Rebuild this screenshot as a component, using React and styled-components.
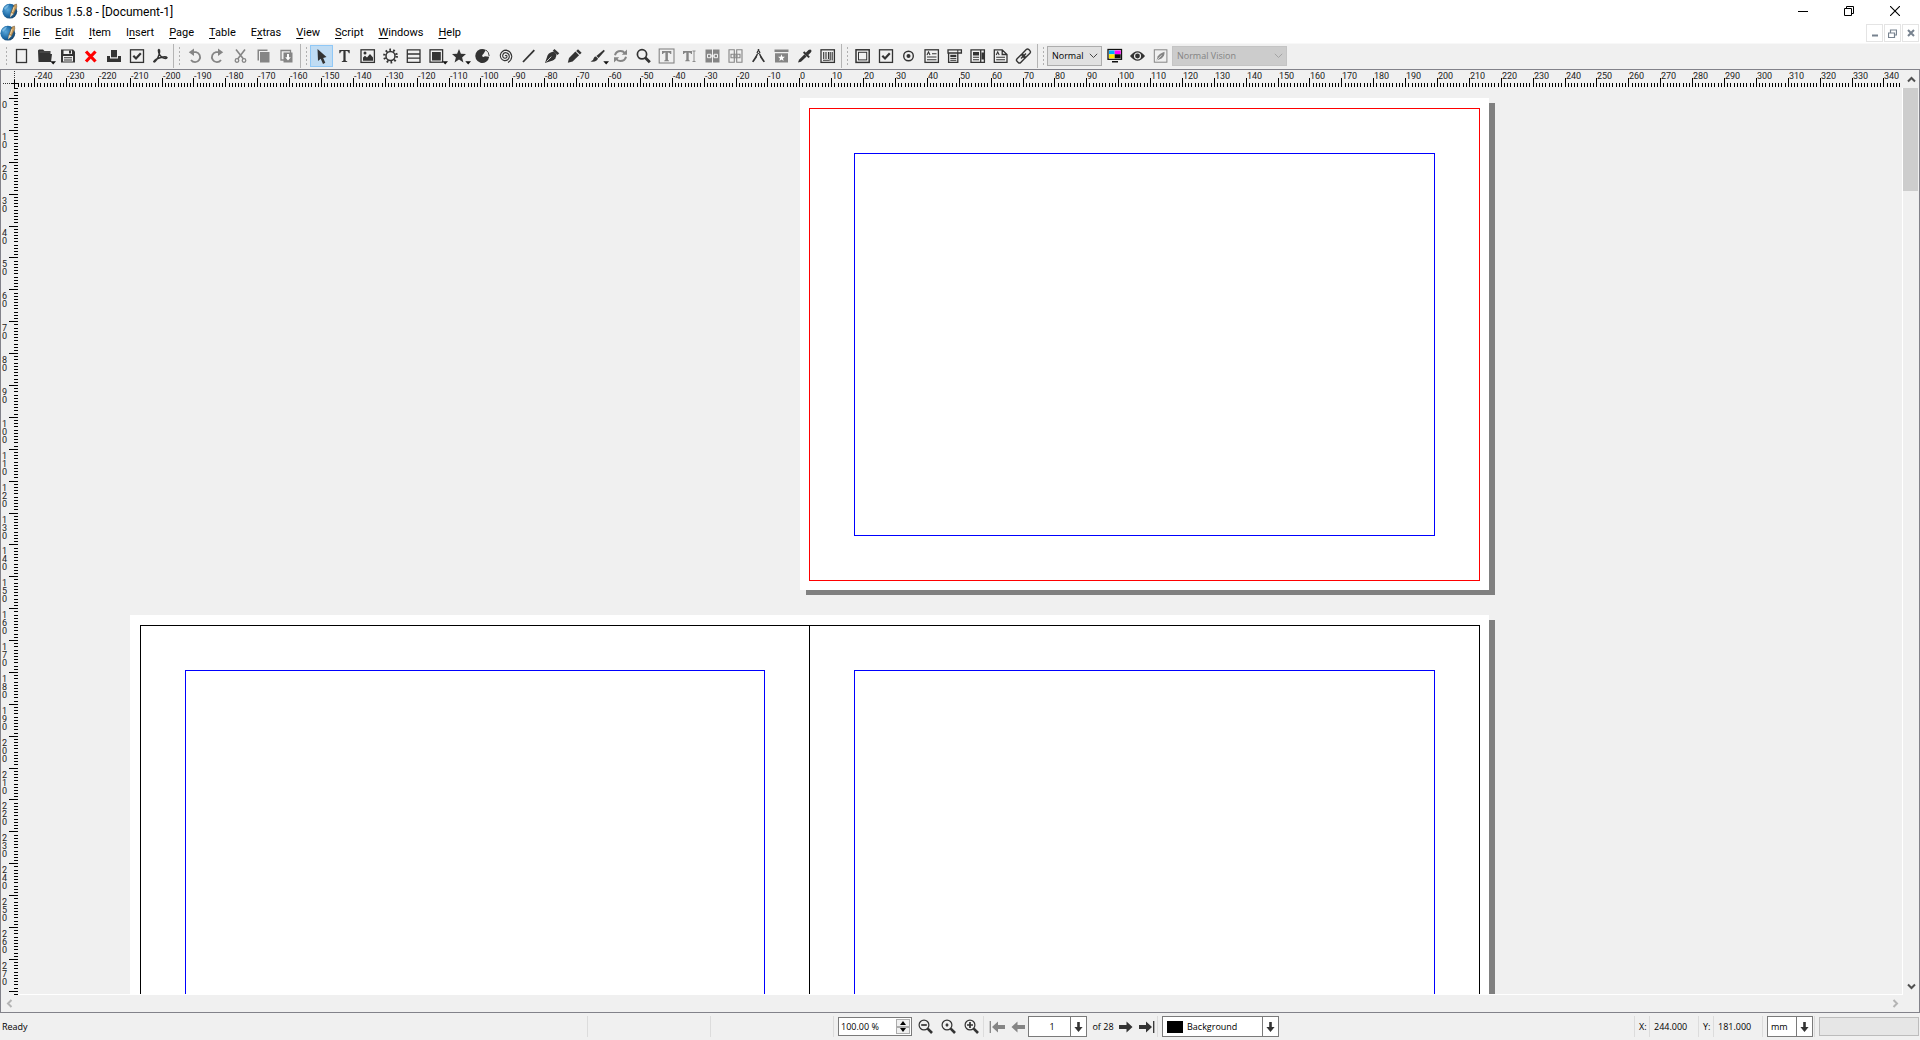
import React from "react";
import styled, { createGlobalStyle } from "styled-components";

const GlobalStyle = createGlobalStyle`
  *, *::before, *::after { box-sizing: border-box; }
  html, body, #root { height: 100%; }
  body {
    margin: 0;
    overflow: hidden;
    background: #f0f0f0;
    color: #000;
    font: 9px/12px "Open Sans", "Noto Sans", sans-serif;
  }
  button, input, select { font: inherit; color: inherit; margin: 0; }
`;

const INK = "#333";
const GREY = "#858585";
const UI_FONT = '"Roboto", "Open Sans", sans-serif';

/* ---------- window frame ---------- */

const Window = styled.div`
  display: flex;
  flex-direction: column;
  height: 100vh;
`;

const TitleBar = styled.header`
  display: flex;
  align-items: center;
  height: 22px;
  padding: 0 2px;
  background: #fff;
`;

const Title = styled.h1`
  flex: 1;
  margin: 0 0 0 5px;
  padding-top: 2px;
  font: 400 12px/20px ${UI_FONT};
`;

const CaptionButton = styled.button`
  display: grid;
  place-items: center;
  width: 46px;
  height: 20px;
  padding: 0;
  border: 0;
  background: none;
`;

const MenuBar = styled.nav`
  display: flex;
  align-items: center;
  height: 21px;
  padding: 1px 1px 0 0;
  background: #fff;
`;

const MenuList = styled.ul`
  display: flex;
  flex: 1;
  gap: 15px;
  margin: 0;
  padding: 0 0 0 7px;
  list-style: none;
`;

const MenuItem = styled.button`
  padding: 0;
  border: 0;
  background: none;
  font: 11px/20px ${UI_FONT};
  text-underline-offset: 2px;
`;

const MdiButtons = styled.div`
  display: flex;
  gap: 1px;
`;

const MdiButton = styled.button`
  display: grid;
  place-items: center;
  width: 17px;
  height: 18px;
  padding: 0;
  border: 1px solid #e4e4e4;
  background: #fff;
`;

/* ---------- toolbar ---------- */

const ToolBar = styled.div`
  display: flex;
  align-items: center;
  height: 26px;
  padding: 0 0 1px 1px;
  border-top: 1px solid #f8f8f8;
`;

const ToolGroup = styled.div`
  display: flex;
  align-items: center;
  height: 100%;
  padding: 0 2px 0 4px;
  border-right: ${(p) => (p.$last ? "0" : "1px solid #b4b4b4")};
`;

const Grip = styled.span`
  width: 3px;
  height: 20px;
  margin-right: 2px;
  background: radial-gradient(circle, #b0b0b0 1px, transparent 1px) 0 0 / 3px 4px;
`;

const ToolButton = styled.button`
  display: block;
  width: 23px;
  height: 22px;
  padding: 0;
  border: 0;
  background: ${(p) => (p.$active ? "#c0dcf3" : "none")};
  box-shadow: ${(p) => (p.$active ? "inset 0 0 0 1px #90c8f6" : "none")};
  color: ${(p) => (p.$dim ? GREY : INK)};
`;

const ToolSelectBox = styled.span`
  position: relative;
  display: flex;
  width: ${(p) => p.$width}px;
  height: 20px;
  margin-right: 1px;
`;

const ToolSelect = styled.select`
  appearance: none;
  width: 100%;
  padding: 0 4px;
  border: 1px solid ${(p) => (p.disabled ? "#c4c4c4" : "#adadad")};
  border-radius: 0;
  background: ${(p) => (p.disabled ? "#ccc" : "#e1e1e1")};
  color: ${(p) => (p.disabled ? "#838383" : "#000")};
  opacity: 1;
`;

const Chevron = styled.svg`
  position: absolute;
  right: 4px;
  top: 7px;
  pointer-events: none;
`;

/* ---------- document area ---------- */

const Document = styled.main`
  display: grid;
  grid-template: 18px minmax(0, 1fr) 17px / 17px minmax(0, 1fr) 16px;
  flex: 1;
  min-height: 0;
  border: 1px solid #82828a;
`;

const Ruler = styled.div`
  display: grid;
  overflow: hidden;
`;

const Ticks = styled.svg`
  grid-area: 1 / 1;
  display: block;
`;

const Labels = styled.div`
  grid-area: 1 / 1;
  display: flex;
  flex-direction: ${(p) => (p.$vertical ? "column" : "row")};
  font: 9px/8px ${UI_FONT};
  color: #222;
`;

const Label = styled.span`
  display: flex;
  flex: none;
  flex-direction: ${(p) => (p.$vertical ? "column" : "row")};
  padding: ${(p) => (p.$vertical ? "3px 0 0 1px" : "2px 0 0 1px")};
`;

const Canvas = styled.section`
  display: flex;
  flex-direction: column;
  gap: 25px;
  padding: 10px 0 0 112px;
  overflow: hidden;
  border: solid #fff;
  border-width: 0 1px 1px 0;
`;

const Sheet = styled.div`
  display: flex;
  flex: none;
  width: ${(p) => p.$width}px;
  height: 492px;
  margin-left: ${(p) => p.$indent}px;
  padding: 10px 9px 9px ${(p) => p.$bleed}px;
  background: #fff;
  box-shadow: 6px 5px 0 #808080;
`;

const Page = styled.div`
  display: flex;
  flex: none;
  width: ${(p) => p.$width}px;
  padding: 44px;
  border: 1px solid ${(p) => p.$edge};
  & + & { margin-left: -1px; }
`;

const Margins = styled.div`
  flex: 1;
  border: 1px solid #00f;
`;

const VScroll = styled.div`
  display: flex;
  flex-direction: column;
  grid-row: 1 / 3;
  grid-column: 3;
`;

const HScroll = styled.div`
  display: flex;
  justify-content: space-between;
  grid-row: 3;
  grid-column: 1 / 3;
`;

const ScrollButton = styled.button`
  display: grid;
  place-items: center;
  width: 16px;
  height: ${(p) => (p.disabled ? 16 : 18)}px;
  padding: 0;
  border: 0;
  background: none;
  color: ${(p) => (p.disabled ? "#b4b4b4" : "#505050")};
`;

const Track = styled.div`
  flex: 1;
`;

const Thumb = styled.div`
  width: 15px;
  height: 11.6%;
  background: #cdcdcd;
`;

/* ---------- status bar ---------- */

const StatusBar = styled.footer`
  display: grid;
  grid-template-columns: minmax(0, 17fr) auto minmax(0, 13fr);
  height: 27px;
`;

const StatusPart = styled.div`
  display: flex;
  align-items: center;
  justify-content: ${(p) => p.$justify || "flex-start"};
  padding: 0 ${(p) => p.$end || 0}px 0 0;
`;

const Message = styled.span`
  flex: 1;
  padding-left: 2px;
`;

const Divider = styled.i`
  width: 1px;
  height: 21px;
  margin-right: ${(p) => p.$after || 4}px;
  background: #dcdcdc;
`;

const Field = styled.span`
  position: relative;
  display: flex;
  width: ${(p) => p.$width}px;
  height: ${(p) => p.$height || 21}px;
  margin-right: ${(p) => p.$after || 4}px;
  border: 1px solid #7a7a7a;
  background: #fff;
`;

const ZoomInput = styled.input`
  flex: 1;
  min-width: 0;
  padding: 0 2px;
  border: 0;
  background: none;
`;

const Spinner = styled.span`
  display: flex;
  flex-direction: column;
  width: 14px;
  margin: 1px;
`;

const SpinButton = styled.button`
  display: grid;
  place-items: center;
  flex: 1;
  padding: 0;
  border: 1px solid #acacac;
  background: #f0f0f0;
`;

const FieldSelect = styled.select`
  appearance: none;
  flex: 1;
  min-width: 0;
  padding: 0 15px 0 ${(p) => p.$indent || 4}px;
  border: 0;
  border-radius: 0;
  background: none;
  text-align: ${(p) => (p.$center ? "center" : "left")};
`;

const FieldArrow = styled.span`
  position: absolute;
  inset: 0 0 0 auto;
  display: grid;
  place-items: center;
  width: 16px;
  border-left: 1px solid #7a7a7a;
  pointer-events: none;
`;

const Swatch = styled.span`
  align-self: center;
  width: 16px;
  height: 12px;
  margin-left: 4px;
  background: #000;
`;

const StatusButton = styled.button`
  display: grid;
  place-items: center;
  width: ${(p) => p.$width || 23}px;
  height: 22px;
  padding: 0;
  border: 0;
  background: none;
  color: ${(p) => (p.disabled ? GREY : INK)};
`;

const Count = styled.span`
  width: 24px;
  text-align: center;
  white-space: nowrap;
`;

const Coord = styled.output`
  width: ${(p) => p.$width}px;
`;

const Progress = styled.div`
  width: 100px;
  height: 19px;
  border: 1px solid #bcbcbc;
  background: #e6e6e6;
`;

/* ---------- drawings ---------- */

const Logo = () => (
  <svg width="16" height="16" viewBox="0 0 16 16" aria-hidden="true">
    <defs>
      <radialGradient id="globe" cx=".35" cy=".4" r=".7">
        <stop offset="0" stopColor="#5aa7da" />
        <stop offset=".6" stopColor="#1d6aa6" />
        <stop offset="1" stopColor="#173f63" />
      </radialGradient>
    </defs>
    <circle cx="7.8" cy="8.2" r="7.4" fill="url(#globe)" />
    <path d="M2 5Q4 2 7 1.5L6 4L3 7Z" fill="#8fc9ee" opacity=".7" />
    <path d="M9 9.5L12 2L14.5 1L14.8 4L11.5 11L8.5 13.5Z" fill="#c69b5b" stroke="#6b5132" strokeWidth=".5" />
    <path d="M9 10L8 14.5L11.5 11Z" fill="#e9dcc4" />
    <path d="M12 4L10.5 9" stroke="#f3dfb5" strokeWidth=".9" />
  </svg>
);

const More = () => <path d="M17.3 16.2H23L20.2 19.4Z" fill="#111" />;

const outline = { fill: "none", stroke: "currentColor", strokeWidth: 1.3 };

const icons = {
  blank: <rect x="6.5" y="4.5" width="10" height="13" {...outline} />,
  open: <><path d="M5 5.5L6 4.5H10L11.5 6H17.5V9H19L18 17H5.5Z" fill="currentColor" /><path d="M6.5 7H17" stroke="#777" strokeWidth=".6" /><More /></>,
  save: <><path d="M5 4.5H17L19 6.5V17.5H5Z" fill="currentColor" /><path d="M7.5 5.5H16V9H7.5ZM7 11H17V16.5H7Z" fill="#f0f0f0" /><path d="M13 5.5H15V8.5H13ZM8 12.2H16V13.2H8ZM8 14.5H16V15.5H8Z" fill="currentColor" /></>,
  close: <path d="M7 6.5L16.5 16.5M16.5 6.5L7 16.5" stroke="#f00" strokeWidth="3.2" />,
  print: <><path d="M5 11H8V13.5H16V11H19V17H5Z" fill="currentColor" /><path d="M9 5H15V12.3H9Z" fill="currentColor" /></>,
  check: <><rect x="5.5" y="4.8" width="13" height="12.6" {...outline} /><path d="M8.3 10.8L11 13.5L15.8 8.3" {...outline} strokeWidth="2.2" /></>,
  pdf: <path d="M11.5 5Q10.5 4 10.4 5.5Q10.7 10.5 15 12.8Q18.5 14.2 19 12.6Q18 11.2 13 12.4Q7.5 13.6 5.8 16.6Q6.6 17.6 8.7 14.6Q12.2 9 11.5 5" {...outline} strokeWidth="1.5" />,
  undo: <><path d="M9 7.2H13A5 5 0 1 1 8 15" {...outline} strokeWidth="1.8" /><path d="M11 3.5V11L5.8 7.2Z" fill="currentColor" /></>,
  redo: <><path d="M14 7.2H10A5 5 0 1 0 15 15" {...outline} strokeWidth="1.8" /><path d="M12 3.5V11L17.2 7.2Z" fill="currentColor" /></>,
  cut: <><path d="M7 4.5L14.5 14M16 4.5L8.7 14" {...outline} strokeWidth="1.6" /><circle cx="8" cy="15.5" r="1.8" {...outline} /><circle cx="15" cy="15.5" r="1.8" {...outline} /></>,
  copy: <><path d="M5.5 4.5H15.5V6H7V15.5H5.5Z" fill="currentColor" /><path d="M8 7H17.5V17.5H8Z" fill="currentColor" /></>,
  paste: <><path d="M6 5.5H15.5V15H6Z" {...outline} /><path d="M8.5 7.5H17.5V17.5H8.5Z" fill="currentColor" /><path d="M13 9V13" stroke="#fff" strokeWidth="2" /><path d="M10.2 12.2H15.8L13 15.5Z" fill="#fff" /></>,
  select: <path d="M7.5 4L8 16L10.7 13.8L13 19L15.3 17.8L13.2 13L16.5 12Z" fill="currentColor" />,
  text: <path d="M6.3 5H16.7V8.3H15.8Q15.4 6.2 13.5 6.1H12.6V15.2Q12.6 16.1 14.2 16.2V17H8.8V16.2Q10.4 16.1 10.4 15.2V6.1H9.5Q7.6 6.2 7.2 8.3H6.3Z" fill="currentColor" />,
  image: <><rect x="5" y="4.8" width="13.4" height="12.6" {...outline} /><path d="M7 15.8V12.5L9 10.8L11 12.5L14 9L17 12.5V15.8Z" fill="currentColor" /><circle cx="9" cy="8" r="1.5" fill="currentColor" /></>,
  gear: <><circle cx="11.5" cy="11" r="4.5" {...outline} strokeWidth="1.5" /><circle cx="11.5" cy="11" r="6.2" {...outline} strokeWidth="2.4" strokeDasharray="1.7 2.196" /></>,
  table: <path d="M5.3 4.8H18V17.4H5.3ZM5.3 9H18M5.3 13.2H18" {...outline} />,
  shape: <><rect x="5" y="4.8" width="12.6" height="12.4" {...outline} /><path d="M7 7H15.8V15.5H7Z" fill="currentColor" /><More /></>,
  star: <><path d="M11 4L12.9 8.8L18 9.1L14.1 12.4L15.4 17.4L11 14.6L6.6 17.4L7.9 12.4L4 9.1L9.1 8.8Z" fill="currentColor" /><More /></>,
  arc: <><path d="M14.8 4.9A7 7 0 1 0 18.2 11.8L13.8 11.2Q12.4 12.6 11.2 11.2Q10.8 9.6 12.4 8.9Z" fill="currentColor" /><path d="M14.8 4.9Q18 7 18.2 11" {...outline} strokeWidth=".9" /></>,
  spiral: <path d="M11.2 11Q12 9.5 13 11Q13.2 13.2 11 13.3Q8.5 13 8.7 10.4Q9.4 7.4 12.2 7.7Q15.6 8.6 15.3 12Q14.2 15.9 10.4 15.6Q6.2 14.5 6.3 10Q7.6 5.2 12.2 5.1Q17.2 6.2 17.8 11.5Q17.4 15.6 14 17.5" {...outline} strokeWidth="1.1" />,
  line: <path d="M6 17L17.3 5.2" {...outline} strokeWidth="1.8" />,
  pen: <><path d="M5 18L7.5 10.5Q9.5 7 14 6.6L16.5 9.2Q16.2 13.8 12.8 15.6Z" fill="currentColor" /><path d="M13.6 4.8L18.4 9.2" {...outline} strokeWidth="2.5" /><path d="M6.5 16.5L11.3 11.7" stroke="#f0f0f0" strokeWidth=".8" /></>,
  pencil: <><path d="M4.8 17.7L6 13L12.4 6.6L16.1 10.2L9.6 16.6Z" fill="currentColor" /><path d="M13.2 5.9L15 4.2L18.6 7.8L16.9 9.5Z" fill="currentColor" /></>,
  brush: <><path d="M17.8 4.8L18.8 6L12.6 13L10.4 11Z" fill="currentColor" /><path d="M9.9 11.6L12 13.6Q11 17.4 4.5 16.6Q7.8 15 7.8 13Q8.6 11.6 9.9 11.6Z" fill="currentColor" /><More /></>,
  rotate: <><path d="M6 10.3Q7 6 11.6 6Q14.3 6 15.7 8M17 11.7Q16 16 11.4 16Q8.7 16 7.3 14" {...outline} strokeWidth="2" /><path d="M18 4.5V9.7H12.8ZM5 17.5V12.3H10.2Z" fill="currentColor" /></>,
  zoom: <><circle cx="10" cy="9.3" r="4.6" {...outline} strokeWidth="1.7" /><path d="M13.3 12.7L17.8 17.2" {...outline} strokeWidth="2.8" /></>,
  editText: <><rect x="4.2" y="4" width="14.8" height="14" {...outline} strokeWidth="1.1" /><path d="M7 6H16.3V9H15.3Q15 7.6 12.9 7.5V14.6Q12.9 15.4 14 15.5V16.3H9.2V15.5Q10.4 15.4 10.4 14.6V7.5Q8.2 7.6 8 9H7Z" fill="currentColor" /></>,
  story: <><path d="M5 6H14V9H13.1Q12.9 7.6 10.7 7.5V14.6Q10.7 15.4 11.8 15.5V16.3H7.2V15.5Q8.3 15.4 8.3 14.6V7.5Q6.1 7.6 5.9 9H5Z" fill="currentColor" /><path d="M14.5 6H17.5M16 6V16.5M14.5 16.5H17.5" {...outline} strokeWidth=".9" /></>,
  link: <><path d="M4.5 4.5H11V17.5H4.5ZM12 4.5H18.5V17.5H12Z" fill="currentColor" /><path d="M6.5 9.3H10V12.7H6.5ZM13 9.3H16.5V12.7H13ZM9 11H14" fill="none" stroke="#fff" strokeWidth=".9" /></>,
  unlink: <><path d="M5 4.8H10.3V17.2H5ZM12.7 4.8H18V17.2H12.7Z" {...outline} strokeWidth="1.1" /><path d="M7 9.3H16V12.7H7ZM9 11H14" {...outline} strokeWidth="1.1" /></>,
  measure: <><circle cx="11.5" cy="7.3" r="1.8" fill="currentColor" /><circle cx="11.5" cy="7.3" r=".7" fill="#f0f0f0" /><path d="M11.5 4V6M10.4 9L9 11.8M12.6 9L14 11.8" {...outline} strokeWidth="1.5" /><path d="M8.6 11L10.1 12L6.5 17.3L5 16.4ZM14.4 11L12.9 12L16.5 17.3L18 16.4Z" fill="currentColor" /></>,
  copyProps: <><path d="M4.5 4.5H18.5V7H4.5ZM5 8.3H18V17.5H5Z" fill="currentColor" /><path d="M11.5 9.3L12.4 11.7L14.9 11.8L13 13.4L13.6 15.9L11.5 14.5L9.4 15.9L10 13.4L8.1 11.8L10.6 11.7Z" fill="#fff" /></>,
  dropper: <><path d="M5 17.5L6 14.8L11.5 9.3L13.6 11.4L8 16.8Z" fill="currentColor" /><path d="M10.6 7L16.2 12.4" {...outline} strokeWidth="2" /><path d="M12.5 8L15.5 5Q17.3 3.8 18.2 5Q19 6.2 17.8 7.4L15 10.3Z" fill="currentColor" /></>,
  barcode: <><rect x="5" y="4.8" width="13.4" height="12.6" {...outline} /><path d="M7.7 7V14M10 7V14M12.5 7V14M14.2 7V15.5M16.2 7V15.5M7 15.3H13.5" {...outline} strokeWidth="1.1" /></>,
  button: <><rect x="5" y="4.8" width="13.2" height="12.6" {...outline} strokeWidth="1.5" /><rect x="7.5" y="7.3" width="8.2" height="7.6" {...outline} strokeWidth="1" /></>,
  radio: <><circle cx="11.5" cy="11" r="4.8" {...outline} strokeWidth="1.4" /><circle cx="11.5" cy="11" r="2" fill="currentColor" /></>,
  textField: <><rect x="5" y="4.8" width="13.4" height="12.6" {...outline} /><path d="M7 10L8.5 7L10 10M12 8.7H16.5M7 12H16.5M7 14.8H16.5" {...outline} strokeWidth="1.1" /></>,
  combo: <><path d="M5 4.8H18.4V8H5ZM5.6 8V17.4H14.8V8" {...outline} /><path d="M7.3 9.8H13.3V12H7.3Z" fill="currentColor" /><path d="M7.3 13.4H13.3M7.3 15.3H13.3M14.8 5V8" {...outline} strokeWidth="1" /></>,
  list: <><path d="M5 4.8H18.4V17.4H5ZM14.7 5V17.4" {...outline} /><path d="M7 7H13V10.5H7ZM15.5 7.5H18V14.5H15.5Z" fill="currentColor" /><path d="M7 12.3H13M7 14.8H13" {...outline} strokeWidth="1.1" /></>,
  note: <><path d="M5.3 4.8H13.2L18 9.5V17.4H5.3ZM13.2 4.8V9.5H18" {...outline} /><path d="M7.2 10L8.7 7L10.2 10M7.2 12.2H16M7.2 14.8H16" {...outline} strokeWidth="1.1" /></>,
  chain: <g transform="rotate(-45 11.5 11)"><rect x="3.2" y="8.4" width="9" height="5.2" rx="1.8" {...outline} strokeWidth="1.4" /><rect x="10.8" y="8.4" width="9" height="5.2" rx="1.8" {...outline} strokeWidth="1.4" /><path d="M8 11H15" {...outline} strokeWidth="1.4" /></g>,
  display: <><rect x="5" y="4.5" width="13.5" height="9.8" fill="#fff" stroke="#111" strokeWidth="1.3" /><path d="M6 5.5H11.7V9.3H6Z" fill="#0af" /><path d="M11.7 5.5H17.7V9.3H11.7Z" fill="#f0f" /><path d="M6 9.3H11.7V13.3H6Z" fill="#ffe800" /><path d="M11.7 9.3H17.7V13.3H11.7ZM9 16H15V17.6H9Z" fill="#111" /></>,
  eye: <><path d="M4 11Q11.5 1.5 19 11Q11.5 20.5 4 11Z" fill="currentColor" /><circle cx="11.5" cy="11" r="3" fill="none" stroke="#f0f0f0" strokeWidth="1.2" /></>,
  preview: <><rect x="5.3" y="4.8" width="12.6" height="12.4" {...outline} strokeWidth="1" /><path d="M7.5 15.5L8.8 11.3Q10.5 8.5 15.5 6.8Q16 11 12.5 13.5Z" fill="currentColor" /><path d="M8 15L12.5 10.3" stroke="#eee" strokeWidth=".8" /></>,
};

const IconSvg = ({ children }) => (
  <svg width="23" height="22" viewBox="0 0 23 22" aria-hidden="true">{children}</svg>
);

const DownChevron = ({ color }) => (
  <Chevron width="9" height="6" viewBox="0 0 9 6" aria-hidden="true">
    <path d="M.8 .8L4.5 4.5L8.2 .8" fill="none" stroke={color} />
  </Chevron>
);

const DownArrow = () => (
  <svg width="9" height="12" viewBox="0 0 9 12" aria-hidden="true">
    <path d="M3.2 1H5.8V6H8.6L4.5 11L.4 6H3.2Z" fill={INK} />
  </svg>
);

const Magnifier = ({ mark }) => (
  <svg width="23" height="22" viewBox="0 0 23 22" aria-hidden="true">
    <circle cx="10" cy="9" r="4.9" fill="none" stroke="currentColor" strokeWidth="1.2" />
    <path d="M13.7 12.6L18 17" stroke="currentColor" strokeWidth="2.6" />
    <path d={mark} stroke="currentColor" strokeWidth="1.7" />
  </svg>
);

const PageArrow = ({ left, bar }) => (
  <svg width="16" height="14" viewBox="0 0 16 14" aria-hidden="true">
    <g transform={left ? "matrix(-1 0 0 1 16 0)" : undefined}>
      <path d={bar ? "M0 5H7V1.5L13 7L7 12.5V9H0Z" : "M1 5H8.5V1.5L14.5 7L8.5 12.5V9H1Z"} fill="currentColor" />
      {bar && <path d="M14.7 1V13" stroke="currentColor" strokeWidth="1.3" />}
    </g>
  </svg>
);

/* ---------- data ---------- */

const menus = [
  ["", "F", "ile"], ["", "E", "dit"], ["", "I", "tem"], ["I", "n", "sert"], ["", "P", "age"],
  ["", "T", "able"], ["E", "x", "tras"], ["", "V", "iew"], ["", "S", "cript"],
  ["", "W", "indows"], ["", "H", "elp"],
];

const fileTools = [
  ["New", "blank"], ["Open", "open"], ["Save", "save"], ["Close", "close"],
  ["Print", "print"], ["Preflight Verifier", "check"], ["Save as PDF", "pdf"],
];

const editTools = [
  ["Undo", "undo", 1], ["Redo", "redo", 1], ["Cut", "cut", 1], ["Copy", "copy", 1], ["Paste", "paste", 1],
];

const drawTools = [
  ["Select Item", "select"], ["Text Frame", "text"], ["Image Frame", "image"], ["Render Frame", "gear"],
  ["Table", "table"], ["Shape", "shape"], ["Polygon", "star"], ["Arc", "arc"], ["Spiral", "spiral"],
  ["Line", "line"], ["Bezier Curve", "pen"], ["Freehand Line", "pencil"], ["Calligraphic Line", "brush"],
  ["Rotate Item", "rotate", 1], ["Zoom", "zoom"], ["Edit Contents", "editText", 1], ["Edit Text", "story", 1],
  ["Link Text Frames", "link", 1], ["Unlink Text Frames", "unlink", 1], ["Measurements", "measure"],
  ["Copy Item Properties", "copyProps", 1], ["Eye Dropper", "dropper"], ["Barcode", "barcode"],
];

const pdfTools = [
  ["Push Button", "button"], ["Check Box", "check"], ["Radio Button", "radio"], ["Text Field", "textField"],
  ["Combo Box", "combo"], ["List Box", "list"], ["Text Annotation", "note"], ["Link Annotation", "chain"],
];

const viewTools = [["Toggle Color Management", "display"], ["Preview Mode", "eye"], ["Edit in Preview Mode", "preview", 1]];

const PX_PER_MM = 3.1886;

/* ---------- parts ---------- */

const Tools = ({ items }) =>
  items.map(([name, icon, dim]) => (
    <ToolButton key={name} type="button" aria-label={name} $dim={dim} $active={icon === "select"}>
      <IconSvg>{icons[icon]}</IconSvg>
    </ToolButton>
  ));

const RulerScale = ({ origin, from, to, vertical }) => {
  const at = (mm) => Math.round(origin + mm * PX_PER_MM);
  const marks = [];
  for (let mm = from - 9; mm <= to + 19; mm += 1) marks.push(mm);
  const tens = marks.filter((mm) => mm % 10 === 0 && mm <= to);
  const size = at(to + 20);
  return (
    <>
      <Ticks width={vertical ? 17 : size} height={vertical ? size : 18} shapeRendering="crispEdges" aria-hidden="true">
        {marks.map((mm) => {
          const long = mm % 10 === 0 ? 9 : 4;
          return vertical ? (
            <rect key={mm} x={17 - long} y={at(mm)} width={long} height="1" />
          ) : (
            <rect key={mm} x={at(mm)} y={17 - long} width="1" height={long} />
          );
        })}
      </Ticks>
      <Labels $vertical={vertical}>
        <Label style={vertical ? { height: at(from) } : { width: at(from) }} />
        {tens.map((mm) => {
          const span = at(mm + 10) - at(mm);
          return (
            <Label key={mm} $vertical={vertical} style={vertical ? { height: span } : { width: span }}>
              {vertical ? String(mm).split("").map((d, i) => <span key={i}>{d}</span>) : mm}
            </Label>
          );
        })}
      </Labels>
    </>
  );
};

export default function App() {
  return (
    <Window>
      <GlobalStyle />
      <TitleBar>
        <Logo />
        <Title>Scribus 1.5.8 - [Document-1]</Title>
        <CaptionButton type="button" aria-label="Minimize">
          <svg width="10" height="10"><path d="M0 5.5H10" stroke="#000" /></svg>
        </CaptionButton>
        <CaptionButton type="button" aria-label="Restore">
          <svg width="10" height="10"><path d="M.5 2.5H7.5V9.5H.5ZM2.5 2.5V.5H9.5V7.5H7.5" fill="none" stroke="#000" /></svg>
        </CaptionButton>
        <CaptionButton type="button" aria-label="Close">
          <svg width="10" height="10"><path d="M0 0L10 10M10 0L0 10" stroke="#000" strokeWidth="1.1" /></svg>
        </CaptionButton>
      </TitleBar>

      <MenuBar>
        <Logo />
        <MenuList>
          {menus.map(([before, key, after]) => (
            <li key={before + key + after}>
              <MenuItem type="button">{before}<u>{key}</u>{after}</MenuItem>
            </li>
          ))}
        </MenuList>
        <MdiButtons>
          <MdiButton type="button" aria-label="Minimize document">
            <svg width="8" height="8"><path d="M1 6.5H7" stroke="#77828f" strokeWidth="2" /></svg>
          </MdiButton>
          <MdiButton type="button" aria-label="Restore document">
            <svg width="9" height="9"><path d="M.5 4H6.5V8.5H.5ZM2.5 3.5V1H8.5V6H7" fill="none" stroke="#77828f" strokeWidth="1.2" /></svg>
          </MdiButton>
          <MdiButton type="button" aria-label="Close document">
            <svg width="8" height="8"><path d="M1 1L7 7M7 1L1 7" stroke="#77828f" strokeWidth="2" /></svg>
          </MdiButton>
        </MdiButtons>
      </MenuBar>

      <ToolBar role="toolbar">
        <ToolGroup><Grip /><Tools items={fileTools} /></ToolGroup>
        <ToolGroup><Grip /><Tools items={editTools} /></ToolGroup>
        <ToolGroup><Grip /><Tools items={drawTools} /></ToolGroup>
        <ToolGroup><Grip /><Tools items={pdfTools} /></ToolGroup>
        <ToolGroup $last>
          <Grip />
          <ToolSelectBox $width={55}>
            <ToolSelect aria-label="Preview quality"><option>Normal</option></ToolSelect>
            <DownChevron color="#444" />
          </ToolSelectBox>
          <Tools items={viewTools} />
          <ToolSelectBox $width={115}>
            <ToolSelect aria-label="Visual appearance" disabled><option>Normal Vision</option></ToolSelect>
            <DownChevron color="#a4a4a4" />
          </ToolSelectBox>
        </ToolGroup>
      </ToolBar>

      <Document>
        <svg width="17" height="18" shapeRendering="crispEdges" aria-hidden="true">
          <path d="M2 13.5H10M13.5 1V10" stroke="#333" strokeDasharray="1 1" />
          <path d="M10 13.5H17M13.5 10V18" stroke="#000" />
        </svg>
        <Ruler><RulerScale origin={781.3} from={-240} to={340} /></Ruler>
        <Ruler><RulerScale origin={10} from={0} to={270} vertical /></Ruler>
        <Canvas>
          <Sheet $width={689} $indent={670} $bleed={9}>
            <Page $width={671} $edge="#f00"><Margins /></Page>
          </Sheet>
          <Sheet $width={1359} $indent={0} $bleed={10}>
            <Page $width={670} $edge="#000"><Margins /></Page>
            <Page $width={671} $edge="#000"><Margins /></Page>
          </Sheet>
        </Canvas>
        <VScroll>
          <ScrollButton type="button" aria-label="Scroll up">
            <svg width="9" height="7"><path d="M1 5.5L4.5 2L8 5.5" fill="none" stroke="currentColor" strokeWidth="2" /></svg>
          </ScrollButton>
          <Track><Thumb /></Track>
          <ScrollButton type="button" aria-label="Scroll down">
            <svg width="9" height="7"><path d="M1 1.5L4.5 5L8 1.5" fill="none" stroke="currentColor" strokeWidth="2" /></svg>
          </ScrollButton>
        </VScroll>
        <HScroll>
          <ScrollButton type="button" aria-label="Scroll left" disabled>
            <svg width="7" height="9"><path d="M5.5 1L2 4.5L5.5 8" fill="none" stroke="currentColor" strokeWidth="2" /></svg>
          </ScrollButton>
          <ScrollButton type="button" aria-label="Scroll right" disabled>
            <svg width="7" height="9"><path d="M1.5 1L5 4.5L1.5 8" fill="none" stroke="currentColor" strokeWidth="2" /></svg>
          </ScrollButton>
        </HScroll>
      </Document>

      <StatusBar>
        <StatusPart>
          <Message>Ready</Message>
          <Divider $after={122} />
          <Divider $after={122} />
        </StatusPart>
        <StatusPart>
          <Divider />
          <Field $width={74} $height={19} $after={2}>
            <ZoomInput aria-label="Zoom" defaultValue="100.00 %" />
            <Spinner>
              <SpinButton type="button" aria-label="Zoom up">
                <svg width="6" height="4"><path d="M0 4L3 0L6 4Z" /></svg>
              </SpinButton>
              <SpinButton type="button" aria-label="Zoom down">
                <svg width="6" height="4"><path d="M0 0L3 4L6 0Z" /></svg>
              </SpinButton>
            </Spinner>
          </Field>
          <StatusButton type="button" aria-label="Zoom out"><Magnifier mark="M7.2 9H12.8" /></StatusButton>
          <StatusButton type="button" aria-label="Zoom to 100%"><Magnifier mark="M8.6 9H11.4M10 7.6V10.4" /></StatusButton>
          <StatusButton type="button" aria-label="Zoom in"><Magnifier mark="M7 9H13M10 6V12" /></StatusButton>
          <Divider $after={2} />
          <StatusButton type="button" aria-label="First page" $width={21} disabled><PageArrow left bar /></StatusButton>
          <StatusButton type="button" aria-label="Previous page" $width={21} disabled><PageArrow left /></StatusButton>
          <Field $width={59}>
            <FieldSelect aria-label="Page" $center><option>1</option></FieldSelect>
            <FieldArrow><DownArrow /></FieldArrow>
          </Field>
          <Count>of 28</Count>
          <StatusButton type="button" aria-label="Next page" $width={21}><PageArrow /></StatusButton>
          <StatusButton type="button" aria-label="Last page" $width={21}><PageArrow bar /></StatusButton>
          <Divider />
          <Field $width={117}>
            <Swatch />
            <FieldSelect aria-label="Layer"><option>Background</option></FieldSelect>
            <FieldArrow><DownArrow /></FieldArrow>
          </Field>
        </StatusPart>
        <StatusPart $justify="flex-end" $end={1}>
          <Divider />
          <Coord $width={10}>X:</Coord>
          <Divider />
          <Coord $width={44}>244.000</Coord>
          <Divider />
          <Coord $width={10}>Y:</Coord>
          <Divider />
          <Coord $width={44}>181.000</Coord>
          <Divider />
          <Field $width={46} $after={1}>
            <FieldSelect aria-label="Unit" $indent={3}><option>mm</option></FieldSelect>
            <FieldArrow><DownArrow /></FieldArrow>
          </Field>
          <Divider />
          <Progress role="progressbar" aria-label="Progress" />
        </StatusPart>
      </StatusBar>
    </Window>
  );
}
